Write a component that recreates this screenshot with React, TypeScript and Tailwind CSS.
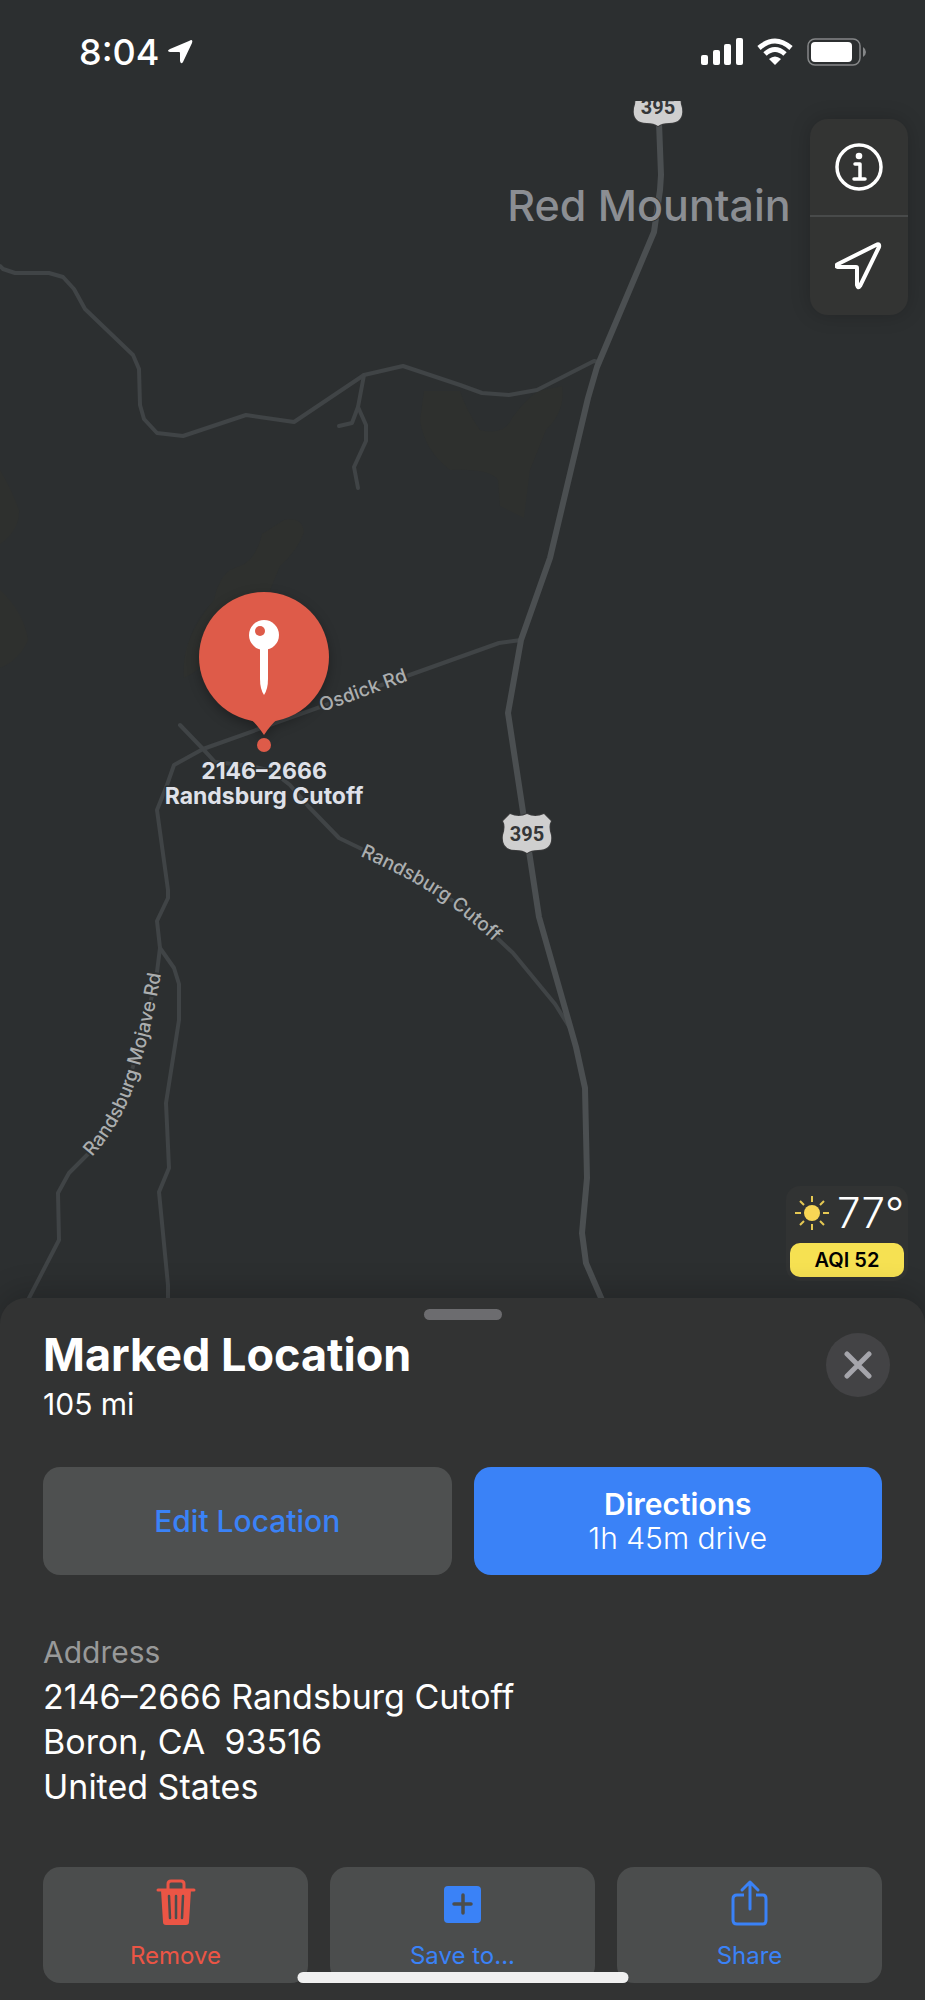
const roads = [
  "M0 266 L3 269 L15 273 H49 L63 277 L74 289 L85 309 L133 355 L139 369 L140 405 L144 419 L157 433 L183 436 L246 415 L294 422 L364 375 L403 366 L460 385 L482 393 L509 395 L537 390 L594 361 L600 362",
  "M364 375 L358 407 L366 425 V441 L354 467 L358 488",
  "M358 407 L352 423 L339 426",
  "M521 640 L499 643 L404 677 L203 749 L174 765 L167 785 L157 810 L168 890 V898 L157 921 L160 948 L157 972 L153 992 L135 1060 L118 1115 L89 1153 L69 1173 L58 1193 L59 1240 L28 1300",
  "M160 948 L174 968 L179 984 V1020 L166 1103 L169 1168 L159 1192 L168 1285 V1300",
  "M180 725 L203 749 L215 762 L250 766 L272 771 L290 785 L308 806 L339 838 L370 853 L416 878 L458 904 L497 938 L513 953 L555 1004 L570 1028",
];

const highway =
  "M658 96 L661 175 L660 190 L654 232 L597 367 L588 398 L550 558 L521 640 L508 713 L539 917 L576 1047 L585 1088 L587 1178 L582 1233 L586 1263 L602 1300";

const Shield = ({ x, y }: { x: number; y: number }) => (
  <g transform={`translate(${x} ${y})`}>
    <path
      d="M-17 -19 Q-8 -15 0 -19 Q8 -15 17 -19 L24 -12 Q21 -7 24 2 Q26 17 11 17 Q4 17 0 20 Q-4 17 -11 17 Q-26 17 -24 2 Q-21 -7 -24 -12 Z"
      fill="#cfcfcf"
      stroke="#3a3b3c"
      strokeWidth="2"
      paintOrder="stroke"
    />
    <text y="8" textAnchor="middle" className="fill-[#343638] font-['Roboto',sans-serif] text-[20px] font-bold">
      395
    </text>
  </g>
);

const MapCanvas = () => (
  <svg
    viewBox="0 0 925 1298"
    preserveAspectRatio="xMidYMid slice"
    className="absolute inset-0 h-full w-full font-['Inter',sans-serif]"
    role="img"
    aria-label="Map"
  >
    <defs>
      <path id="osdick" d="M322 712 L410 680" />
      <path id="cutoff" d="M360 856 Q430 887 466 918 Q490 937 510 958" />
      <path id="mojave" d="M92 1157 Q128 1117 141 1062 Q156 1010 163 960" />
    </defs>
    <g fill="#2e302e">
      <path d="M0 470 Q12 490 19 510 Q20 530 0 544 Z" />
      <path d="M0 590 Q24 612 28 640 Q20 660 0 668 Z" />
      <path d="M284 520 Q302 516 304 532 Q298 550 280 566 L266 600 Q220 660 184 678 Q180 640 214 600 Q220 570 240 566 Q256 560 262 534 Z" />
      <path d="M424 391 H460 Q466 410 480 430 Q505 436 512 418 Q525 400 538 391 L562 386 Q566 410 546 430 L530 470 L524 518 L500 506 L498 480 Q490 468 450 470 Q424 450 420 420 Z" />
    </g>
    <g fill="none" stroke="#404446" strokeWidth="4" strokeLinejoin="round" strokeLinecap="round">
      {roads.map((d) => (
        <path key={d} d={d} />
      ))}
    </g>
    <path d={highway} fill="none" stroke="#4b4f51" strokeWidth="6" strokeLinejoin="round" />
    <Shield x={658} y={106} />
    <Shield x={527} y={833} />

    <text
      x="649"
      y="221"
      textAnchor="middle"
      paintOrder="stroke"
      stroke="#2c2f30"
      strokeWidth="2"
      className="fill-[#8b8e93] text-[43px] font-medium"
    >
      Red Mountain
    </text>

    <g
      paintOrder="stroke"
      stroke="#2c2f30"
      strokeWidth="4"
      strokeLinejoin="round"
      className="fill-[#abaeaf] text-[19px] font-medium"
    >
      <text>
        <textPath href="#osdick">Osdick Rd</textPath>
      </text>
      <text>
        <textPath href="#cutoff">Randsburg Cutoff</textPath>
      </text>
      <text>
        <textPath href="#mojave">Randsburg Mojave Rd</textPath>
      </text>
    </g>

    <g fill="#de5b49" className="drop-shadow-[0_4px_6px_rgba(0,0,0,0.3)]">
      <circle cx="264" cy="657" r="65" />
      <path d="M250 719 Q256 723 264 735 Q272 723 278 719 Z" />
    </g>
    <path d="M260 646 H268 V679 Q268 689 264 695 Q260 689 260 679 Z" fill="white" />
    <circle cx="264" cy="635" r="15" fill="white" />
    <circle cx="260" cy="631" r="5" fill="#de5b49" />
    <circle cx="264" cy="745" r="7" fill="#de5b49" />
    <g
      textAnchor="middle"
      paintOrder="stroke"
      stroke="#2c2f30"
      strokeWidth="3"
      strokeLinejoin="round"
      className="fill-[#dfe1e9] text-[23px] font-bold"
    >
      <text x="264" y="779">2146–2666</text>
      <text x="264" y="804">Randsburg Cutoff</text>
    </g>
  </svg>
);

const StatusBar = () => (
  <header className="relative flex h-[101px] items-start justify-between bg-[#2c2f30] pt-[30px] pr-[58px] pl-[79px]">
    <div className="flex items-center gap-2">
      <span className="text-[36px] leading-[44px] font-medium">8:04</span>
      <svg width="26" height="26" viewBox="0 0 26 26" fill="white">
        <path d="M24 1 Q26 1 25 4 L16 23 Q14 26 13 22 V14 Q13 13 12 13 H3 Q-1 12 3 10 L22 2 Z" />
      </svg>
    </div>
    <div className="flex items-center gap-[14px] pt-2">
      <svg width="42" height="28" viewBox="0 0 42 28" fill="white">
        <rect x="0" y="17" width="7" height="10" rx="2" />
        <rect x="12" y="12" width="7" height="15" rx="2" />
        <rect x="23" y="6" width="7" height="21" rx="2" />
        <rect x="35" y="0" width="7" height="27" rx="2" />
      </svg>
      <svg width="36" height="28" viewBox="0 0 36 28" fill="none" stroke="white" strokeWidth="5">
        <path d="M2 10 Q18 -4 34 10" />
        <path d="M8 16 Q18 7 28 16" />
        <path d="M18 27 L12 21 Q18 16 24 21 Z" fill="white" stroke="none" />
      </svg>
      <svg width="60" height="28" viewBox="0 0 60 28" fill="none">
        <rect x="1" y="1" width="52" height="26" rx="7" stroke="#858788" strokeWidth="1.5" />
        <rect x="4" y="4" width="41" height="20" rx="4" fill="white" />
        <path d="M56 9 Q59 11 59 14 Q59 17 56 19 Z" fill="#858788" />
      </svg>
    </div>
  </header>
);

const MapControls = () => (
  <div className="flex w-[98px] flex-col divide-y-2 divide-[#484a4a] rounded-[18px] bg-[#333433] shadow-[0_0_20px_rgba(0,0,0,0.2)]">
    <button aria-label="Map settings" className="flex h-[98px] items-center justify-center">
      <svg width="48" height="48" viewBox="0 0 48 48" fill="none" stroke="white" strokeLinecap="round" strokeLinejoin="round">
        <circle cx="24" cy="24" r="22" strokeWidth="3.5" />
        <circle cx="24" cy="13" r="3.3" fill="white" stroke="none" />
        <path d="M20 21 H25 V36 M19 36 H30" strokeWidth="3.5" />
      </svg>
    </button>
    <button aria-label="Track my location" className="flex h-[98px] items-center justify-center">
      <svg width="48" height="48" viewBox="0 0 48 48" fill="none" stroke="white" strokeWidth="4" strokeLinejoin="round">
        <path d="M41 3 Q45 1 44 5 L25 44 Q23 47 22 43 V26 Q22 25 21 25 H3 Q-1 24 3 22 Z" />
      </svg>
    </button>
  </div>
);

const Weather = () => (
  <div className="flex w-[122px] flex-col rounded-[14px] bg-[#313333] px-1 pb-1">
    <div className="flex h-[53px] items-center justify-between pl-[5px]">
      <svg width="34" height="34" viewBox="0 0 34 34" stroke="#e5c853" strokeWidth="2">
        <circle cx="17" cy="17" r="8" fill="#f8d655" stroke="none" />
        <path d="M17 0 V6 M17 28 V34 M0 17 H6 M28 17 H34 M5 5 L9 9 M25 25 L29 29 M5 29 L9 25 M25 9 L29 5" />
      </svg>
      <span className="text-[42px] leading-[50px] font-light">77°</span>
    </div>
    <div className="mt-1 rounded-[10px] bg-[#f6e152] text-center text-[20px] leading-[34px] font-semibold text-black">
      AQI 52
    </div>
  </div>
);

const actions = [
  {
    label: "Remove",
    color: "text-[#eb5545]",
    icon: (
      <svg width="40" height="50" viewBox="0 0 40 50" fill="none" stroke="currentColor">
        <path d="M12 10 V5 Q12 2 15 2 H25 Q28 2 28 5 V10" strokeWidth="3" />
        <path d="M2 11 H38" strokeWidth="3" strokeLinecap="round" />
        <path d="M5 11 H35 L33 43 Q33 46 30 46 H10 Q7 46 7 43 Z" fill="currentColor" stroke="none" />
        <path d="M13 17 L14 39 M20 17 V39 M27 17 L26 39" stroke="#4b4d4d" strokeWidth="2.5" strokeLinecap="round" />
      </svg>
    ),
  },
  {
    label: "Save to...",
    color: "text-[#3a82f7]",
    icon: (
      <svg width="40" height="50" viewBox="0 0 40 50" fill="none">
        <rect x="1" y="7" width="37" height="37" rx="4" fill="currentColor" />
        <path d="M11 25 H28 M20 16 V34" stroke="#4b4d4d" strokeWidth="3.5" strokeLinecap="round" />
      </svg>
    ),
  },
  {
    label: "Share",
    color: "text-[#3a82f7]",
    icon: (
      <svg width="40" height="50" viewBox="0 0 40 50" fill="none" stroke="currentColor" strokeWidth="3">
        <path d="M14 16 H7 Q3 16 3 20 V41 Q3 45 7 45 H33 Q36 45 36 41 V20 Q36 16 33 16 H26" />
        <path d="M20 30 V3 M12 11 L20 3 L28 11" strokeLinecap="round" strokeLinejoin="round" />
      </svg>
    ),
  },
];

const LocationSheet = () => (
  <section className="relative rounded-t-[26px] bg-[#323333] px-[43px] pt-[11px] pb-[17px] shadow-[0_-6px_30px_rgba(0,0,0,0.2)]">
    <div className="mx-auto h-[11px] w-[78px] rounded-full bg-[#6c6c6f]" />
    <div className="-mr-2 flex items-start justify-between pt-[6px]">
      <div>
        <h1 className="text-[45px] leading-[58px] font-bold">Marked Location</h1>
        <p className="text-[30px] leading-10">105 mi</p>
      </div>
      <button
        aria-label="Close"
        className="mt-[7px] flex h-16 w-16 items-center justify-center rounded-full bg-[#434345]"
      >
        <svg width="28" height="28" viewBox="0 0 28 28" stroke="#a5a5ab" strokeWidth="5" strokeLinecap="round">
          <path d="M3 3 L25 25 M25 3 L3 25" />
        </svg>
      </button>
    </div>

    <div className="mt-[43px] grid grid-cols-2 gap-[22px]">
      <button className="h-[108px] rounded-[17px] bg-[#4e5050] text-[30px] font-medium text-[#3a82f7]">
        Edit Location
      </button>
      <button className="h-[108px] rounded-[17px] bg-[#3a82f7] text-[30px] leading-[34px]">
        <span className="block font-semibold">Directions</span>
        <span className="block font-light">1h 45m drive</span>
      </button>
    </div>

    <div className="mt-[55px]">
      <h2 className="text-[30px] leading-[44px] text-[#989999]">Address</h2>
      <address className="text-[34px] leading-[45px] whitespace-pre not-italic">
        2146–2666 Randsburg Cutoff
        <br />
        {"Boron, CA  93516"}
        <br />
        United States
      </address>
    </div>

    <div className="mt-[58px] grid grid-cols-3 gap-[22px]">
      {actions.map((action) => (
        <button
          key={action.label}
          className={`flex h-[116px] flex-col items-center rounded-[17px] bg-[#4b4d4d] pt-3 ${action.color}`}
        >
          {action.icon}
          <span className="mt-3 text-[24px] leading-[30px]">{action.label}</span>
        </button>
      ))}
    </div>
    <div className="absolute bottom-[17px] left-1/2 h-[11px] w-[331px] -translate-x-1/2 rounded-full bg-[#f0f0f0]" />
  </section>
);

export default function App() {
  return (
    <main className="flex min-h-screen flex-col bg-[#2c2f30] font-['Inter',sans-serif] text-white">
      <div className="relative flex flex-1 flex-col">
        <MapCanvas />
        <StatusBar />
        <div className="relative flex flex-1 flex-col items-end justify-between pt-[18px] pr-[17px] pb-[17px]">
          <MapControls />
          <Weather />
        </div>
      </div>
      <LocationSheet />
    </main>
  );
}
